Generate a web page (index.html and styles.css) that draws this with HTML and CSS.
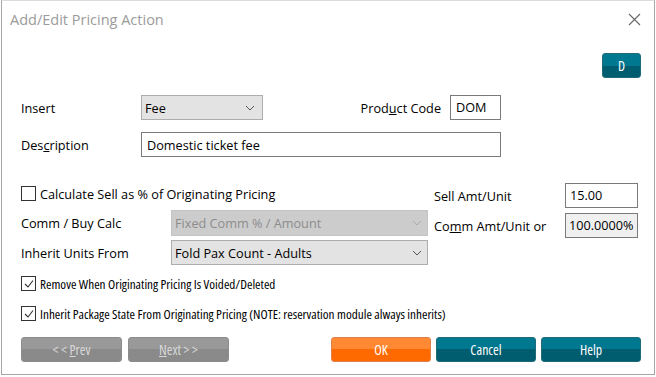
FILE: index.html
```html
<!DOCTYPE html>
<html lang="en">
  <head>
    <meta charset="UTF-8" />
    <title>Add/Edit Pricing Action</title>
    <link rel="stylesheet" href="styles.css">
  </head>
  <body>
    <div class="dialog">
      <div class="titlebar">
        <span class="title">Add/Edit Pricing Action</span>
        <svg class="close" width="13" height="13" viewBox="0 0 13 13">
          <path d="M1 1 L12 12 M12 1 L1 12" stroke="#666" stroke-width="1.1" fill="none" />
        </svg>
      </div>

      <div class="content">
        <div class="toolbar">
          <button class="btn teal small">D</button>
        </div>

        <div class="row row-insert">
          <label class="label">Insert</label>
          <div class="select insert-select">
            <span>Fee</span>
            <svg class="chev" width="10" height="6" viewBox="0 0 10 6"><path d="M1 1 L5 5 L9 1" stroke="#555" fill="none" /></svg>
          </div>
          <label class="label code-label">Prod<u>u</u>ct Code</label>
          <div class="input code-input">DOM</div>
        </div>

        <div class="row row-desc">
          <label class="label">Des<u>c</u>ription</label>
          <div class="input desc-input">Domestic ticket fee</div>
        </div>

        <div class="calc">
          <div class="calc-left">
            <div class="check-row first">
              <span class="checkbox"></span>
              <span>Calculate Sell as % of Originating Pricing</span>
            </div>
            <div class="row row-comm">
              <label class="label wide">Comm / Buy Calc</label>
              <div class="select disabled long-select">
                <span>Fixed Comm % / Amount</span>
                <svg class="chev" width="10" height="6" viewBox="0 0 10 6"><path d="M1 1 L5 5 L9 1" stroke="#aaa" fill="none" /></svg>
              </div>
            </div>
            <div class="row row-units">
              <label class="label wide">Inherit Units From</label>
              <div class="select long-select">
                <span>Fold Pax Count - Adults</span>
                <svg class="chev" width="10" height="6" viewBox="0 0 10 6"><path d="M1 1 L5 5 L9 1" stroke="#555" fill="none" /></svg>
              </div>
            </div>
          </div>
          <div class="calc-right">
            <div class="row row-sell">
              <label class="label amt-label">Sell Amt/Unit</label>
              <div class="input amt-input">15.00</div>
            </div>
            <div class="row row-commamt">
              <label class="label amt-label">Co<u>m</u>m Amt/Unit or</label>
              <div class="input amt-input readonly">100.0000%</div>
            </div>
          </div>
        </div>

        <div class="check-row narrow remove-row">
          <span class="checkbox checked">
            <svg width="12" height="12" viewBox="0 0 12 12"><path d="M2 6 L5 9 L10 2.5" stroke="#333" stroke-width="1.1" fill="none" /></svg>
          </span>
          <span>Remove When Originating Pricing Is Voided/Deleted</span>
        </div>
        <div class="check-row narrow inherit-row">
          <span class="checkbox checked">
            <svg width="12" height="12" viewBox="0 0 12 12"><path d="M2 6 L5 9 L10 2.5" stroke="#333" stroke-width="1.1" fill="none" /></svg>
          </span>
          <span>Inherit Package State From Originating Pricing (NOTE: reservation module always inherits)</span>
        </div>

        <div class="footer">
          <div class="nav-buttons">
            <button class="btn gray">&lt; &lt; <u>P</u>rev</button>
            <button class="btn gray"><u>N</u>ext &gt; &gt;</button>
          </div>
          <div class="action-buttons">
            <button class="btn orange">OK</button>
            <button class="btn teal">Cancel</button>
            <button class="btn teal">Help</button>
          </div>
        </div>
      </div>
    </div>
  </body>
</html>
```

FILE: styles.css
```css
body {
  margin: 0;
  background: #fff;
  font-family: "Open Sans", "Noto Sans", sans-serif;
  font-size: 12.7px;
  color: #000;
}
.dialog {
  width: 652px;
  height: 373px;
  margin-left: 1px;
  border: 1px solid #a6a6a6;
  border-top-color: #dcdcdc;
  background: #fff;
  position: relative;
}
.titlebar {
  height: 38px;
  display: flex;
  align-items: center;
  justify-content: space-between;
  padding: 0 13px 0 8px;
}
.title {
  font-size: 14.5px;
  color: #9b9b9b;
  margin-top: -1px;
}
.close {
  margin-top: -1px;
}
.content {
  padding: 0 13px 0 19px;
}
.toolbar {
  display: flex;
  justify-content: flex-end;
  margin-top: 14px;
  height: 25px;
}
.row {
  display: flex;
  align-items: center;
}
.label {
  width: 120px;
  flex: none;
  white-space: nowrap;
}
.label.wide {
  width: 150px;
}
.row-insert {
  margin-top: 17px;
  height: 25px;
}
.select {
  box-sizing: border-box;
  height: 25px;
  display: flex;
  align-items: center;
  justify-content: space-between;
  padding: 0 4px 0 3px;
  background: #e3e3e3;
  border: 1px solid #adadad;
}
.select.disabled {
  background: #cccccc;
  border-color: #c4c4c4;
  color: #8c8c8c;
}
.chev {
  margin-right: 1px;
}
.insert-select {
  width: 122px;
  padding-right: 6px;
}
.code-label {
  width: auto;
  margin-left: auto;
  margin-right: 9px;
}
.input {
  box-sizing: border-box;
  height: 25px;
  border: 1px solid #7a7a7a;
  padding: 0 5px;
  display: flex;
  align-items: center;
  background: #fff;
}
.code-input {
  width: 51px;
  margin-right: 140px;
  padding-bottom: 2px;
}
.row-desc {
  margin-top: 12px;
}
.desc-input {
  width: 360px;
}
.calc {
  display: flex;
  margin-top: 26px;
}
.calc-left {
  width: 413px;
  flex: none;
}
.calc-right {
  flex: 1;
}
.check-row {
  display: flex;
  align-items: center;
  gap: 4px;
  height: 15px;
  white-space: nowrap;
}
.check-row.first {
  margin-top: 3px;
}
.checkbox {
  box-sizing: border-box;
  width: 15px;
  height: 15px;
  border: 1px solid #333;
  display: flex;
  align-items: center;
  justify-content: center;
  flex: none;
}
.row-comm {
  margin-top: 9px;
}
.long-select {
  width: 257px;
  height: 26px;
}
.row-units {
  margin-top: 4px;
}
.row-units .long-select {
  height: 25px;
}
.amt-label {
  width: 131px;
}
.amt-input {
  width: 73px;
  padding: 0 4px 2px;
}
.amt-input.readonly {
  background: #f0f0f0;
  padding: 0 3px 2px;
}
.row-commamt {
  margin-top: 5px;
}
.narrow {
  font-family: "Open Sans", sans-serif;
  font-stretch: 75%;
  font-size: 13.2px;
}
.remove-row {
  margin-top: 11px;
}
.inherit-row {
  margin-top: 15px;
}
.footer {
  display: flex;
  justify-content: space-between;
  margin-top: 16px;
}
.nav-buttons,
.action-buttons {
  display: flex;
  gap: 5px;
}
.nav-buttons {
  gap: 6px;
}
.btn {
  box-sizing: border-box;
  width: 101px;
  height: 25px;
  border-radius: 3px;
  border: 1px solid #555;
  color: #fff;
  font-family: "Open Sans", sans-serif;
  font-stretch: 75%;
  font-size: 13.8px;
  padding: 0 0 1px;
  cursor: pointer;
}
.btn u {
  text-decoration-thickness: 1px;
}
.btn.small {
  width: 39px;
}
.action-buttons .btn {
  width: 100px;
}
.btn.teal {
  background: linear-gradient(#007890 0, #007890 50%, #005d70 50%, #005d70 100%);
  border-color: #1e6a7a;
}
.btn.orange {
  background: linear-gradient(#ff8a33 0, #ff8a33 50%, #ff6a00 50%, #ff6a00 100%);
  border-color: #e0804a;
}
.btn.gray {
  background: linear-gradient(#999 0, #999 50%, #8a8a8a 50%, #8a8a8a 100%);
  border-color: #8c8c8c;
  color: #d8d8d8;
}
```
